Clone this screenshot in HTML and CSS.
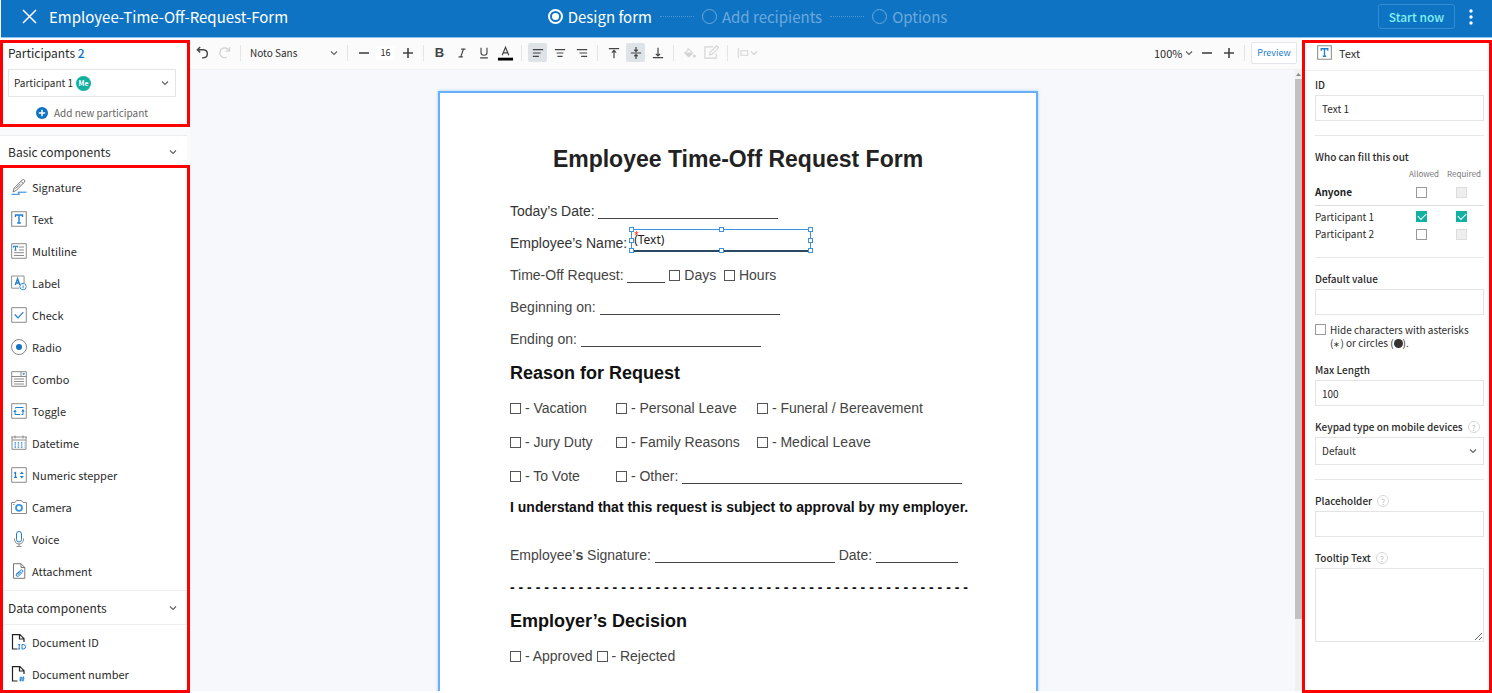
FILE: index.html
```html
<!DOCTYPE html>
<html lang="en">
<head>
<meta charset="utf-8">
<meta name="viewport" content="width=device-width, initial-scale=1">
<title>Employee-Time-Off-Request-Form</title>
<link rel="stylesheet" href="styles.css">
</head>
<body>
<svg class="defs" aria-hidden="true">
  <symbol id="chevron" viewBox="0 0 10 10"><path d="M2 3.500l3 3 3-3" fill="none" stroke="currentColor" stroke-width="1.200"/></symbol>
  <symbol id="minus" viewBox="0 0 12 12"><path d="M1 6h10" stroke="currentColor" stroke-width="1.600"/></symbol>
  <symbol id="plus" viewBox="0 0 12 12"><path d="M1 6h10M6 1v10" stroke="currentColor" stroke-width="1.600"/></symbol>
  <symbol id="text-field" viewBox="0 0 16 16"><path d="M.7.7h14.600v14.600H.7z" fill="#fff" stroke="#8b8b8b" stroke-width="1.100"/><path d="M4.500 6V4h7v2M8 4v8M6.200 12h3.600" fill="none" stroke="#1f7fd0" stroke-width="1.400"/></symbol>
</svg>
<header class="topbar">
  <div class="topbar-left">
    <button class="plain" aria-label="Close"><svg width="15" height="15" viewBox="0 0 15 15"><path d="M1 1l13 13M14 1L1 14" stroke="#fff" stroke-width="1.500"/></svg></button>
    <h1 class="doc-name">Employee-Time-Off-Request-Form</h1>
  </div>
  <nav class="steps" aria-label="Progress">
    <a class="step current" href="#design"><span class="step-dot"></span>Design form</a>
    <span class="step-line"></span>
    <a class="step" href="#recipients"><span class="step-dot"></span>Add recipients</a>
    <span class="step-line"></span>
    <a class="step" href="#options"><span class="step-dot"></span>Options</a>
  </nav>
  <div class="topbar-right">
    <button class="start">Start now</button>
    <button class="plain" aria-label="More"><svg width="4" height="16" viewBox="0 0 4 16" fill="#fff"><circle cx="2" cy="2" r="1.700"/><circle cx="2" cy="8" r="1.700"/><circle cx="2" cy="14" r="1.700"/></svg></button>
  </div>
</header>

<div class="workspace">
  <aside class="sidebar">
    <section class="marked participants">
      <h2 class="group-title">Participants <span class="count">2</span></h2>
      <button class="participant-pick">Participant 1 <span class="me">Me</span><svg class="chev"><use href="#chevron"/></svg></button>
      <button class="add-participant"><svg width="12" height="12" viewBox="0 0 12 12"><circle cx="6" cy="6" r="6" fill="#0f73c3"/><path d="M2.800 6h6.400M6 2.800v6.400" stroke="#fff" stroke-width="1.500"/></svg>Add new participant</button>
    </section>
    <button class="group-head basic-head">Basic components<svg class="chev"><use href="#chevron"/></svg></button>
    <section class="marked components">
      <ul class="component-list">
        <li><button class="component"><svg viewBox="0 0 16 16" fill="none" stroke="#777"><path d="M2 13l1.200-4L11.400.9q1-.8 2 .1t.1 2L5.400 11.300 2 13zM10 2.400l2.200 2.200M4.500 9.800l5-5"/><path d="M.5 15.300h8l-1.500-2.100h8.500" stroke="#1f7fd0"/></svg>Signature</button></li>
        <li><button class="component"><svg><use href="#text-field"/></svg>Text</button></li>
        <li><button class="component"><svg viewBox="0 0 16 16" fill="none" stroke="#8b8b8b"><path d="M.7.7h14.600v14.600H.7zM8 4h5M8 7h5M3 9.700h10M3 12.500h10"/><path d="M2.500 4.500V3.300h4v1.200M4.500 3.300v4M3.500 7.300h2" stroke="#1f7fd0" stroke-width="1.100"/></svg>Multiline</button></li>
        <li><button class="component"><svg viewBox="0 0 17 16" fill="none" stroke="#8b8b8b"><path d="M9 13.500H.6V.6h13.300V8"/><path d="M4.500 10L7 3.500 9.500 10M5.300 8h3.400" stroke="#1f7fd0" stroke-width="1.500"/><circle cx="12.800" cy="11.800" r="3.400" fill="#fff" stroke="#1f7fd0" stroke-width=".9"/><path d="M12.800 11.200v2.400M12.800 9.800v.8" stroke="#1f7fd0"/></svg>Label</button></li>
        <li><button class="component"><svg viewBox="0 0 16 16" fill="none" stroke="#8b8b8b"><path d="M.7.7h14.600v14.600H.7z"/><path d="M3.800 7.500l3.200 3.300 5.300-5.600" stroke="#1f7fd0" stroke-width="1.200"/></svg>Check</button></li>
        <li><button class="component"><svg viewBox="0 0 16 16" fill="none"><circle cx="8" cy="8" r="7.500" stroke="#777" stroke-width=".9"/><circle cx="8" cy="8" r="3" fill="#0f73c3"/></svg>Radio</button></li>
        <li><button class="component"><svg viewBox="0 0 16 16" fill="none" stroke="#8b8b8b"><path d="M.7.7h14.600v14.600H.7zM.7 5.500h14.600M10 .7v4.800M3 8h10M3 10.500h10M3 13h10"/><path d="M11.300 2.300h2.800l-1.400 1.900z" fill="#1f7fd0" stroke="none"/></svg>Combo</button></li>
        <li><button class="component"><svg viewBox="0 0 16 16" fill="none" stroke="#8b8b8b"><path d="M.7.7h14.600v14.600H.7z"/><path d="M12.500 4.500H4.500V5.500M4 8v1M4 9v2.500h5M12 7v4.500h-1.500" stroke="#1f7fd0"/><path d="M2.200 9h3.600L4 6.500zM10.200 8.500h3.600L12 6z" fill="#1f7fd0" stroke="none"/></svg>Toggle</button></li>
        <li><button class="component"><svg viewBox="0 0 16 16" fill="none" stroke="#8b8b8b"><path d="M1 2v12.300h14V2M0 2h16M1 5h14M4 .5v3M12 .5v3"/><path d="M3.500 7.800h10M3.500 10h10M3.500 12.200h10" stroke="#1f7fd0" stroke-width="1.200" stroke-dasharray="1.500 1.700"/></svg>Datetime</button></li>
        <li><button class="component"><svg viewBox="0 0 16 16" fill="none" stroke="#8b8b8b"><path d="M.7.7h14.600v14.600H.7z"/><path d="M3 6.300l1.500-.8V10M3 10.300h3" stroke="#1f7fd0" stroke-width="1.200"/><path d="M8.800 7h4L10.800 4.500zM8.800 9h4l-2 2.500z" fill="#1f7fd0" stroke="none"/></svg>Numeric stepper</button></li>
        <li><button class="component"><svg viewBox="0 0 16 16" fill="none" stroke="#8b8b8b"><path d="M.5 3.500H4L5.500 1.500h5L12 3.500h3.500v11H.5z"/><circle cx="8" cy="8.800" r="3" stroke="#3b93dc" stroke-width="1.800"/><path d="M2 5.500h1.500"/></svg>Camera</button></li>
        <li><button class="component"><svg viewBox="0 0 16 16" fill="none" stroke="#8b8b8b"><rect x="5.500" y=".5" width="5" height="10.500" rx="2.500" stroke="#1f7fd0"/><path d="M3.500 7.500q0 5.500 4.500 5.500t4.500-5.500M8 13v2.500M5.500 15.500h5"/></svg>Voice</button></li>
        <li><button class="component"><svg viewBox="0 0 16 16" fill="none" stroke="#777"><path d="M2.500.7h7.500l3.800 3.800v10.800H2.500zM10 .7v3.800h3.800"/><path d="M5 11.500l4.500-4.200q1.300-.9 2 0t0 1.900L7.500 13q-1.300.8-2 0t-.1-1.800l3.800-3M6.500 12l3.800-3.500" stroke="#1f7fd0"/></svg>Attachment</button></li>
      </ul>
      <button class="group-head data-head">Data components<svg class="chev"><use href="#chevron"/></svg></button>
      <ul class="component-list data-list">
        <li><button class="component"><svg viewBox="0 0 16 16" fill="none" stroke="#222" stroke-width="1.200"><path d="M6.500 15H1.500V.7H9l4 4V8M8.500.7V5H13"/><path d="M7.200 10.500h2M7.200 15h2M8.200 10.500V15M11 10.500h1.200q2.500.3 2.500 2.200t-2.500 2.300H11z" stroke="#1f7fd0" stroke-width="1"/></svg>Document ID</button></li>
        <li><button class="component"><svg viewBox="0 0 16 16" fill="none" stroke="#222" stroke-width="1.200"><path d="M6.500 15H1.500V.7H9l4 4V8M8.500.7V5H13"/><path d="M8.500 12h5M8.200 14h5M10.200 10.500l-.8 5M12.500 10.500l-.8 5" stroke="#1f7fd0" stroke-width="1"/></svg>Document number</button></li>
      </ul>
    </section>
  </aside>

  <main class="editor">
    <div class="toolbar" role="toolbar" aria-label="Formatting">
      <button class="tool" aria-label="Undo"><svg class="turn" viewBox="0 0 14 14" fill="none" stroke="currentColor" stroke-width="1.500"><path d="M4.500 1L1.500 4l3 3M1.800 4H8q4.200.3 4.200 4.400T8 12.800H6.500"/></svg></button>
      <button class="tool off" aria-label="Redo"><svg class="turn" viewBox="0 0 14 14" fill="none" stroke="currentColor" stroke-width="1.400"><path d="M12.500 1v4.500H8M12.200 5.200Q10.500 2 7 2 2 2.500 2 7.500q.3 4.500 5 5 1.500 0 2.500-.7"/></svg></button>
      <span class="sep"></span>
      <label class="pick font-pick"><select aria-label="Font"><option>Noto Sans</option></select><svg class="chev"><use href="#chevron"/></svg></label>
      <span class="sep"></span>
      <button class="tool" aria-label="Smaller"><svg><use href="#minus"/></svg></button>
      <input class="size" aria-label="Font size" value="16">
      <button class="tool" aria-label="Larger"><svg><use href="#plus"/></svg></button>
      <span class="sep"></span>
      <button class="tool bold">B</button>
      <button class="tool" aria-label="Italic"><svg viewBox="0 0 14 14" fill="none" stroke="currentColor" stroke-width="1.400"><path d="M6 2.500h5M3 11.500h5M8.700 2.500l-3.200 9"/></svg></button>
      <button class="tool" aria-label="Underline"><svg viewBox="0 0 14 14" fill="none" stroke="currentColor" stroke-width="1.300"><path d="M3.500 1v5.500q0 3.200 3.500 3.200t3.500-3.200V1M2.500 12.700h9"/></svg></button>
      <button class="tool" aria-label="Text colour"><svg class="wide" viewBox="0 0 18 18" fill="none" stroke="currentColor" stroke-width="1.300"><path d="M5.500 12L9 3.500l3.500 8.500M6.500 9.500h5"/><path d="M1 16h16" stroke="#000" stroke-width="3"/></svg></button>
      <span class="sep"></span>
      <button class="tool on" aria-label="Align left" aria-pressed="true"><svg viewBox="0 0 14 14" stroke="currentColor" stroke-width="1.300"><path d="M1 3h12M1 7h9M1 11h7"/></svg></button>
      <button class="tool" aria-label="Align centre"><svg viewBox="0 0 14 14" stroke="currentColor" stroke-width="1.300"><path d="M1 3h12M3 7h8M4 11h6"/></svg></button>
      <button class="tool" aria-label="Align right"><svg viewBox="0 0 14 14" stroke="currentColor" stroke-width="1.300"><path d="M1 3h12M4 7h9M6 11h7"/></svg></button>
      <span class="sep"></span>
      <button class="tool" aria-label="Align top"><svg viewBox="0 0 14 14" fill="none" stroke="currentColor" stroke-width="1.400"><path d="M1 2h12M7 4v9M4.500 6.500L7 4l2.500 2.500"/></svg></button>
      <button class="tool on" aria-label="Align middle" aria-pressed="true"><svg viewBox="0 0 14 14" fill="none" stroke="currentColor" stroke-width="1.400"><path d="M1 7h12M7 0v5.500M7 14V8.500M5 3.200l2 2 2-2M5 10.800l2-2 2 2"/></svg></button>
      <button class="tool" aria-label="Align bottom"><svg viewBox="0 0 14 14" fill="none" stroke="currentColor" stroke-width="1.400"><path d="M1 12.500h12M7 1v9.500M4.500 8L7 10.500 9.500 8"/></svg></button>
      <span class="sep"></span>
      <button class="tool off" aria-label="Fill" disabled><svg viewBox="0 0 14 14" fill="none" stroke="currentColor" stroke-width="1.200"><path d="M4 1l6 6-4.500 4.500L1 7l4.500-4.500"/><path d="M1.500 7h8l-4 4z" fill="currentColor"/><circle cx="12" cy="10.500" r="1.200" fill="currentColor"/></svg></button>
      <button class="tool off" aria-label="Border" disabled><svg class="wide" viewBox="0 0 18 18" fill="none" stroke="currentColor" stroke-width="1.200"><path d="M11 3H2v12h12v-5M7 11.500l.6-2.800L14.500 2l2 2-6.900 6.900z"/></svg></button>
      <span class="sep"></span>
      <button class="tool off arrange" aria-label="Arrange" disabled><svg viewBox="0 0 14 14" fill="none" stroke="currentColor" stroke-width="1.200"><path d="M1.500 1v12M4.500 4.500h8v5h-8z"/></svg><svg class="chev"><use href="#chevron"/></svg></button>
      <span class="spacer"></span>
      <label class="pick zoom-pick"><select aria-label="Zoom"><option>100%</option></select><svg class="chev"><use href="#chevron"/></svg></label>
      <button class="tool" aria-label="Zoom out"><svg><use href="#minus"/></svg></button>
      <button class="tool" aria-label="Zoom in"><svg><use href="#plus"/></svg></button>
      <span class="sep"></span>
      <button class="preview">Preview</button>
    </div>
    <div class="stage">
      <div class="canvas">
        <article class="page">
          <h2 class="form-title">Employee Time-Off Request Form</h2>
          <p class="line dark">Today’s Date: <span class="blank"></span></p>
          <p class="line dark">Employee’s Name: <span class="blank field-host"><span class="field"><span class="req">*</span>(Text)<i class="h nw"></i><i class="h n"></i><i class="h ne"></i><i class="h w"></i><i class="h e"></i><i class="h sw"></i><i class="h s"></i><i class="h se"></i></span></span></p>
          <p class="line">Time-Off Request: <span class="blank tiny"></span> <span class="box"></span> Days <span class="box second"></span> Hours</p>
          <p class="line">Beginning on: <span class="blank"></span></p>
          <p class="line">Ending on: <span class="blank"></span></p>
          <h3 class="form-heading">Reason for Request</h3>
          <div class="reasons">
            <span><span class="box"></span> - Vacation</span><span><span class="box"></span> - Personal Leave</span><span><span class="box"></span> - Funeral / Bereavement</span>
            <span><span class="box"></span> - Jury Duty</span><span><span class="box"></span> - Family Reasons</span><span><span class="box"></span> - Medical Leave</span>
            <span><span class="box"></span> - To Vote</span><span class="other"><span class="box"></span> - Other: <span class="blank long"></span></span>
          </div>
          <p class="statement">I understand that this request is subject to approval by my employer.</p>
          <p class="line sign">Employee’<b>s</b> Signature: <span class="blank"></span> Date: <span class="blank short"></span></p>
          <p class="line cut">- - - - - - - - - - - - - - - - - - - - - - - - - - - - - - - - - - - - - - - - - - - - - - - - - - - - - -</p>
          <h3 class="form-heading">Employer’s Decision</h3>
          <p class="line decision"><span class="box"></span> - Approved <span class="box"></span> - Rejected</p>
        </article>
      </div>
      <div class="scrollbar"><svg width="7" height="9" viewBox="0 0 7 9"><path d="M1 6l2.500-3L6 6z" fill="#8a8a8a"/></svg><span class="thumb"></span></div>
    </div>
  </main>

  <aside class="marked props">
    <h2 class="props-head"><svg><use href="#text-field"/></svg>Text</h2>
    <form class="props-form">
      <label class="lbl" for="id">ID</label>
      <input class="inp" id="id" value="Text 1">
      <hr>
      <h3 class="lbl">Who can fill this out</h3>
      <table class="perm">
        <thead><tr><td></td><th scope="col">Allowed</th><th scope="col">Required</th></tr></thead>
        <tbody>
          <tr class="anyone"><th scope="row">Anyone</th><td><input type="checkbox" aria-label="Anyone allowed"></td><td><input type="checkbox" aria-label="Anyone required" disabled></td></tr>
          <tr class="first"><th scope="row">Participant 1</th><td><input type="checkbox" aria-label="Participant 1 allowed" checked></td><td><input type="checkbox" aria-label="Participant 1 required" checked></td></tr>
          <tr><th scope="row">Participant 2</th><td><input type="checkbox" aria-label="Participant 2 allowed"></td><td><input type="checkbox" aria-label="Participant 2 required" disabled></td></tr>
        </tbody>
      </table>
      <hr>
      <label class="lbl" for="default">Default value</label>
      <input class="inp" id="default">
      <label class="hide"><input type="checkbox"><span>Hide characters with asterisks<br>(<small>∗</small>) or circles (<i class="disc"></i>).</span></label>
      <label class="lbl" for="max">Max Length</label>
      <input class="inp" id="max" value="100">
      <div class="lbl-row"><label class="lbl" for="keypad">Keypad type on mobile devices</label><button class="help" type="button">?</button></div>
      <div class="pick keypad-pick"><select class="inp" id="keypad"><option>Default</option></select><svg class="chev"><use href="#chevron"/></svg></div>
      <hr>
      <div class="lbl-row"><label class="lbl" for="ph">Placeholder</label><button class="help" type="button">?</button></div>
      <input class="inp" id="ph">
      <div class="lbl-row"><label class="lbl" for="tip">Tooltip Text</label><button class="help" type="button">?</button></div>
      <textarea class="inp" id="tip"></textarea>
    </form>
  </aside>
</div>
</body>
</html>
```
FILE: styles.css
```css
* { box-sizing: border-box; }
body, h1, h2, h3, p, ul { margin: 0; padding: 0; }
ul { list-style: none; }
body {
  display: flex;
  flex-direction: column;
  height: 100vh;
  overflow: hidden;
  background: #fff;
  color: #2b2b2b;
  font: 11px/20px "Noto Sans CJK JP", "Noto Sans CJK SC", sans-serif;
}
button, input, select, textarea { font: inherit; color: inherit; margin: 0; padding: 0; border: 0; background: none; }
select { appearance: none; }
svg { display: block; flex: none; }
.defs { display: none; }
.chev { width: 10px; height: 10px; color: #666; }

/* top bar */
.topbar {
  display: grid;
  grid-template-columns: 1fr auto 1fr;
  align-items: center;
  flex: none;
  height: 38px;
  margin-left: 1px;
  padding: 0 19px 4px 21px;
  background: #0f73c3;
  border-bottom: 1px solid #8fc4f0;
  color: #fff;
}
.topbar-left { display: flex; align-items: center; gap: 12px; }
.doc-name { font-size: 15px; line-height: 24px; font-weight: 400; }
.steps { display: flex; align-items: center; gap: 8px; }
.step { display: flex; align-items: center; gap: 5px; color: #6ba9dc; font-size: 15px; line-height: 24px; text-decoration: none; }
.step-dot { width: 15px; height: 15px; border: 1px solid #6ba9dc; border-radius: 50%; }
.step.current { color: #fff; }
.current .step-dot { border: 2px solid #fff; background: #fff; background-clip: content-box; padding: 2px; }
.step-line { width: 34px; border-top: 1px dotted #4b97d6; }
.topbar-right { display: flex; align-items: center; justify-content: flex-end; gap: 14px; }
.start { width: 77px; height: 25px; border: 1px solid #2f8fd2; border-radius: 3px; color: #7ff0ee; font-size: 12px; font-weight: 500; line-height: 20px; }

/* work area */
.workspace { display: flex; flex: 1; min-height: 0; }
.marked { border: 3px solid #f00; background: #fff; }
.sidebar { display: flex; flex-direction: column; flex: none; width: 190px; padding-top: 2px; background: #f9fafb; }
.participants { display: flex; flex-direction: column; padding: 0 11px 1px 5px; }
.group-title { font-size: 12px; line-height: 20px; font-weight: 400; }
.count { color: #0f73c3; font-weight: 500; }
.participant-pick { display: flex; align-items: center; gap: 3px; height: 28px; margin-top: 6px; padding: 0 5px; border: 1px solid #e4e4e4; font-size: 10px; }
.participant-pick .chev { margin-left: auto; }
.me { width: 15px; height: 15px; border-radius: 50%; background: #12b0a0; color: #fff; font-size: 7px; line-height: 14px; font-weight: 700; }
.add-participant { display: flex; align-items: center; justify-content: center; gap: 6px; margin-top: 6px; color: #666; font-size: 10px; }
.group-head { display: flex; align-items: center; justify-content: space-between; font-size: 12px; text-align: left; }
.basic-head { height: 30px; margin: 8px 3px 0 0; padding: 2px 9px 0 8px; border-top: 1px solid #eee; background: #fff; }
.components { flex: 1; min-height: 0; overflow: hidden; }
.component-list { padding: 3px 0; }
.component { display: flex; align-items: center; gap: 5px; width: 100%; height: 32px; padding-left: 8px; text-align: left; }
.component svg { width: 16px; height: 16px; }
.data-head { width: 100%; height: 35px; padding: 0 9px 0 5px; border: solid #eee; border-width: 1px 0; }
.data-list { padding-top: 1px; }

/* editor */
.editor { display: flex; flex: 1; flex-direction: column; min-width: 0; padding-bottom: 2px; }
.toolbar { display: flex; flex: none; align-items: center; gap: 3px; height: 32px; padding: 0 5px 2px 3px; background: #fbfbfb; border-bottom: 1px solid #f1f1f1; }
.tool { display: flex; flex: none; align-items: center; justify-content: center; width: 19px; height: 19px; border-radius: 2px; color: #444; }
.tool svg { width: 12px; height: 12px; }
.tool svg.turn { width: 13px; height: 13px; }
.tool svg.wide { width: 17px; height: 17px; }
.tool.on { background: #dde3e7; }
.tool.off { color: #d4d4d4; }
.tool.arrange { width: 28px; }
.tool .chev { width: 10px; height: 10px; color: inherit; }
.bold { font: 700 13px/19px "Liberation Sans", Arial, sans-serif; }
.sep { flex: none; width: 1px; height: 16px; margin: 0 3px; background: #e4e4e4; }
.pick { display: grid; align-items: center; }
.pick > * { grid-area: 1 / 1; }
.pick .chev { justify-self: end; pointer-events: none; }
.font-pick { width: 94px; padding: 0 2px 0 3px; font-size: 10px; }
.zoom-pick { width: 40px; }
.size { width: 19px; height: 14px; background: #fff; text-align: center; font-size: 9px; }
.spacer { flex: 1; }
.preview { width: 46px; height: 22px; border: 1px solid #e2e6ea; border-radius: 2px; background: #fff; color: #1f7fd0; font-size: 9px; }
.stage { display: flex; flex: 1; min-height: 0; background: #f7f8fb; }
.canvas { display: flex; flex: 1; justify-content: center; min-width: 0; overflow: hidden; padding: 21px 9px 0 0; }
.scrollbar { display: flex; flex-direction: column; width: 7px; background: #f1f1f1; }
.thumb { height: 87%; background: #c1c1c1; }

/* document page */
.page {
  flex: none;
  width: 600px;
  min-height: 776px;
  padding: 50px 70px;
  border: 2px solid #66b0f8;
  box-shadow: 0 0 3px #9dcbf8;
  background: #fff;
  color: #444;
  font: 14px/32px "Liberation Sans", Arial, sans-serif;
}
.form-title { margin-bottom: 20px; color: #222; font-size: 23px; line-height: 32px; text-align: center; }
.line { white-space: nowrap; }
.dark { color: #333; }
.blank { display: inline-block; width: 180px; height: 13px; border-bottom: 1px solid #444; vertical-align: -3px; }
.blank.tiny { width: 38px; }
.blank.long { width: 280px; }
.blank.short { width: 82px; }
.box { display: inline-block; width: 11px; height: 11px; border: 1px solid #555; vertical-align: -1px; }
.box.second { margin-left: 4px; }
.form-heading { color: #111; font-size: 18px; line-height: 36px; }
.reasons { display: grid; grid-template-columns: 106px 141px 1fr; line-height: 34px; white-space: nowrap; }
.other { grid-column: 2 / 4; }
.statement { color: #111; font-size: 14px; line-height: 28px; font-weight: 700; white-space: nowrap; }
.sign { margin-top: 18px; }
.cut { color: #111; font-weight: 700; }
.decision { line-height: 34px; }
.field-host { position: relative; border-bottom: 0; }
.field { position: absolute; left: 0; bottom: -1px; width: 180px; height: 23px; padding-left: 2px; border: 1px solid #3e93dc; border-bottom: 2px solid #2c4a66; color: #222; font: 12px/20px "Noto Sans", sans-serif; }
.req { position: absolute; left: 2px; top: 1px; color: #f00; font-size: 8px; line-height: 8px; }
.h { position: absolute; width: 5px; height: 5px; border: 1px solid #3e93dc; background: #fff; }
.nw, .n, .ne { top: -3px; }
.w, .e { top: 8px; }
.sw, .s, .se { bottom: -3px; }
.nw, .w, .sw { left: -3px; }
.n, .s { left: 87px; }
.ne, .e, .se { right: -3px; }

/* properties */
.props { flex: none; width: 190px; margin-top: 2px; overflow: hidden; }
.props-head { display: flex; align-items: center; gap: 7px; height: 28px; padding: 0 12px 8px; border-bottom: 1px solid #eee; font-size: 11px; font-weight: 400; }
.props-head svg { width: 15px; height: 15px; }
.props-form { display: flex; flex-direction: column; padding: 4px 5px 0 10px; }
.lbl { font-size: 10px; line-height: 20px; font-weight: 500; white-space: nowrap; }
.inp { width: 100%; height: 26px; padding: 0 6px; border: 1px solid #e4e4e4; background: #fff; font-size: 10px; }
.inp + .lbl, .inp + .lbl-row, .hide + .lbl { margin-top: 11px; }
.props hr { width: 100%; height: 1px; margin: 14px 0 11px; border: 0; background: #e8e8e8; }
.lbl-row { display: flex; align-items: center; gap: 5px; }
.help { flex: none; width: 12px; height: 12px; border: 1px solid #d8d8d8; border-radius: 50%; color: #bbb; font-size: 8px; line-height: 9px; }
.perm { width: 100%; border-collapse: collapse; table-layout: fixed; }
.perm td, .perm th { height: 18px; padding: 0; font-weight: 400; line-height: 16px; text-align: center; vertical-align: middle; }
.perm tbody td { padding-right: 5px; }
.perm th[scope="row"] { text-align: left; font-size: 10px; }
.perm thead td { width: auto; height: 13px; }
.perm thead th { width: 40px; height: 13px; color: #777; font-size: 8px; line-height: 12px; }
.perm .anyone th, .perm .anyone td { height: 25px; border-bottom: 1px solid #ddd; }
.perm .anyone th { color: #222; font-weight: 700; }
.perm .first th, .perm .first td { height: 20px; padding-top: 3px; }
input[type="checkbox"] { position: relative; display: block; flex: none; width: 11px; height: 11px; margin: 0 auto; appearance: none; border: 1px solid #999; background: #fff; }
input[type="checkbox"]:disabled { border-color: #ddd; background: #eee; }
input[type="checkbox"]:checked { border-color: #12b0a0; background: #12b0a0; }
input[type="checkbox"]:checked::after { content: ""; position: absolute; left: 1px; top: 1px; width: 7px; height: 4px; border: solid #fff; border-width: 0 0 1px 1px; rotate: -45deg; }
.hide { display: flex; gap: 4px; margin-top: 8px; font-size: 10px; line-height: 13px; white-space: nowrap; }
.hide input[type="checkbox"] { margin: 1px 0 0; }
.hide + .lbl { margin-top: 10px; }
.hide small { font-size: 8px; }
.disc { display: inline-block; width: 9px; height: 9px; border-radius: 50%; background: #333; vertical-align: -1px; }
.keypad-pick .chev { margin-right: 6px; }
.keypad-pick .inp { height: 28px; }
textarea.inp { height: 74px; resize: vertical; }
```
